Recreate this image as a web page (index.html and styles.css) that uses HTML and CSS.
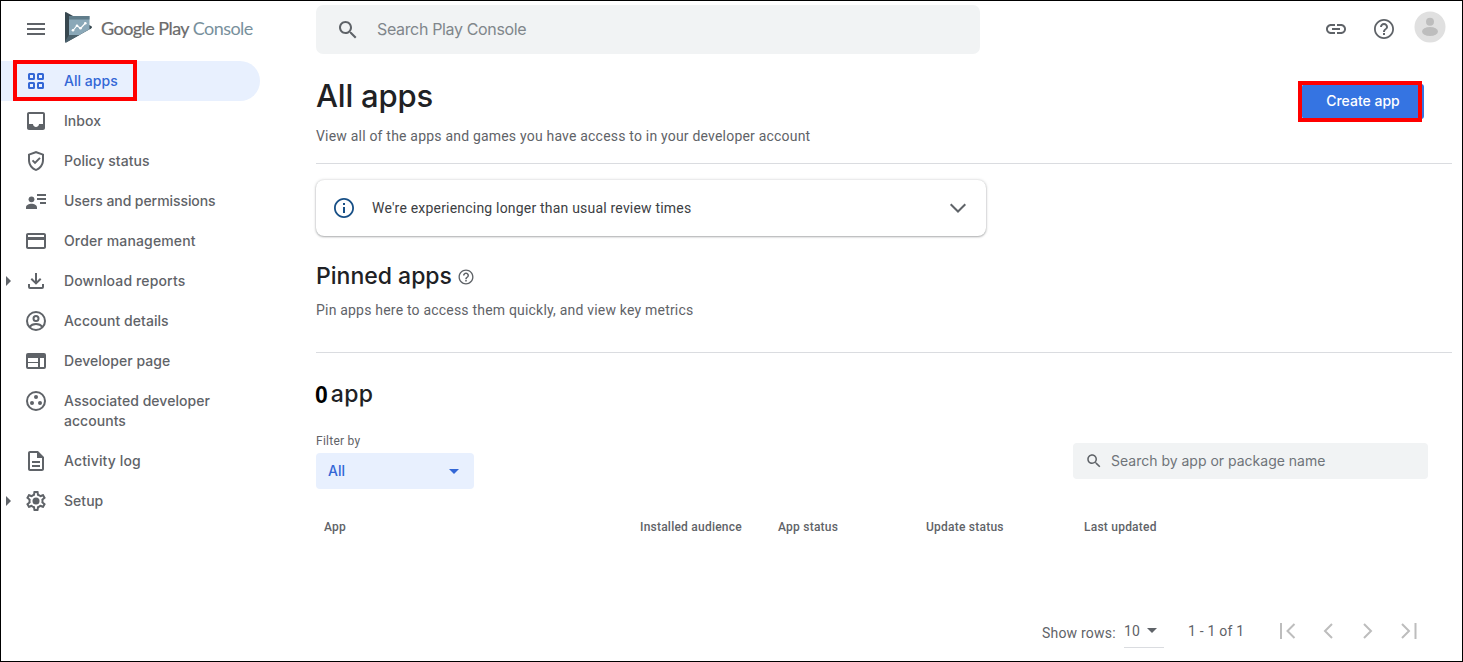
FILE: index.html
```html
<!DOCTYPE html>
<html lang="en">
<head>
<meta charset="utf-8">
<title>Google Play Console</title>
<link rel="stylesheet" href="styles.css">
</head>
<body>
<div class="page">
  <aside class="sidebar">
    <div class="brand">
      <svg class="icon menu" viewBox="0 0 24 24"><path d="M3 18h18v-2H3v2zm0-5h18v-2H3v2zm0-7v2h18V6H3z"/></svg>
      <svg class="logo" viewBox="0 0 28 31" width="28" height="31">
        <path d="M0 1Q0-.3 1.300.3L26 14Q28 15.200 26 16.400L1.500 30.300Q0 31 0 29.500z" fill="#37474f"/>
        <path d="M4 23h10.500L1.500 30.300Q0 31 0 29.500z" fill="#4c626d"/>
        <path d="M4 4h20.500v13.300L14.300 23H4z" fill="#8aa8b8"/>
        <path d="M4 4h20.500v3.500H4z" fill="#607d8b"/>
        <path d="M8 18.500l4-5 3.500 3 5-5.500" fill="none" stroke="#fff" stroke-width="1.200"/>
        <g fill="#fff"><circle cx="8" cy="18.300" r="1.300"/><circle cx="12" cy="13.700" r="1.300"/><circle cx="15.500" cy="16.300" r="1.300"/><circle cx="20.300" cy="11.200" r="1.300"/></g>
      </svg>
      <div class="wordmark"><span class="play">Google Play</span> <span class="console">Console</span></div>
    </div>
    <nav class="nav">
      <a class="item active"><svg class="icon" viewBox="0 0 24 24"><path fill-rule="evenodd" d="M5.500 4h4A1.500 1.500 0 0 1 11 5.500v4A1.500 1.500 0 0 1 9.500 11h-4A1.500 1.500 0 0 1 4 9.500v-4A1.500 1.500 0 0 1 5.500 4zM6 6v3h3V6zM14.500 4h4A1.500 1.500 0 0 1 20 5.500v4a1.500 1.500 0 0 1-1.500 1.500h-4A1.500 1.500 0 0 1 13 9.500v-4A1.500 1.500 0 0 1 14.500 4zM15 6v3h3V6zM5.500 13h4a1.500 1.500 0 0 1 1.500 1.500v4A1.500 1.500 0 0 1 9.500 20h-4A1.500 1.500 0 0 1 4 18.500v-4A1.500 1.500 0 0 1 5.500 13zM6 15v3h3v-3zM14.500 13h4a1.500 1.500 0 0 1 1.500 1.500v4a1.500 1.500 0 0 1-1.500 1.500h-4a1.500 1.500 0 0 1-1.500-1.500v-4a1.500 1.500 0 0 1 1.500-1.500zM15 15v3h3v-3z"/></svg><span>All apps</span><i class="highlight highlight-nav"></i></a>
      <a class="item"><svg class="icon" viewBox="0 0 24 24"><path d="M19 3H5c-1.100 0-2 .9-2 2v14c0 1.100.9 2 2 2h14c1.100 0 2-.9 2-2V5c0-1.100-.9-2-2-2zm0 12h-4c0 1.660-1.350 3-3 3s-3-1.340-3-3H5V5h14v10z"/></svg><span>Inbox</span></a>
      <a class="item"><svg class="icon" viewBox="0 0 24 24"><path d="M12 2 4 5v6.090c0 5.050 3.410 9.760 8 10.910 4.590-1.150 8-5.860 8-10.910V5l-8-3zm6 9.090c0 4-2.550 7.700-6 8.830-3.450-1.130-6-4.820-6-8.830V6.310l6-2.120 6 2.120v4.780zM9.200 10.700 7.800 12.100 11 15.300l5.700-5.700-1.400-1.400L11 12.500z"/></svg><span>Policy status</span></a>
      <a class="item condensed"><svg class="icon" viewBox="0 0 24 24"><circle cx="7.500" cy="10.300" r="2.900"/><path d="M2 20v-1.500C2 16 5 14.800 7.500 14.800S13 16 13 18.500V20zM13 5h9v2h-9zm0 4h9v2h-9zm3 4h6v2h-6z"/></svg><span>Users and permissions</span></a>
      <a class="item wide"><svg class="icon" viewBox="0 0 24 24"><path d="M20 4H4c-1.110 0-1.990.89-1.990 2L2 18c0 1.110.89 2 2 2h16c1.110 0 2-.89 2-2V6c0-1.110-.89-2-2-2zm0 14H4v-7h16v7zm0-10H4V6h16v2z"/></svg><span>Order management</span></a>
      <a class="item expandable wide"><svg class="icon" viewBox="0 0 24 24"><path d="M11 4h2v8l3-3 1.400 1.400L12 15.800 6.600 10.400 8 9l3 3zM4 15h2v3h12v-3h2v3a2 2 0 0 1-2 2H6a2 2 0 0 1-2-2z"/></svg><span>Download reports</span></a>
      <a class="item"><svg class="icon" viewBox="0 0 24 24"><g fill="none" stroke="currentColor" stroke-width="2"><circle cx="12" cy="12" r="9"/><circle cx="12" cy="9.500" r="2.500"/><path d="M5.500 18c1.500-2 4-3 6.500-3s5 1 6.500 3"/></g></svg><span>Account details</span></a>
      <a class="item"><svg class="icon" viewBox="0 0 24 24"><path fill-rule="evenodd" d="M4 4h16a2 2 0 0 1 2 2v12a2 2 0 0 1-2 2H4a2 2 0 0 1-2-2V6a2 2 0 0 1 2-2zM4 9v4h10V9zm0 5v4h10v-4zm12-5v9h4V9z"/></svg><span>Developer page</span></a>
      <a class="item tall"><svg class="icon" viewBox="0 0 24 24"><circle cx="12" cy="12" r="9" fill="none" stroke="currentColor" stroke-width="2"/><circle cx="12" cy="8" r="2"/><circle cx="8" cy="14" r="2"/><circle cx="16" cy="14" r="2"/></svg><span>Associated developer<br>accounts</span></a>
      <a class="item wide"><svg class="icon" viewBox="0 0 24 24"><path d="M8 16h8v2H8zm0-4h8v2H8zm6-10H6c-1.100 0-2 .9-2 2v16c0 1.100.89 2 1.990 2H18c1.100 0 2-.9 2-2V8l-6-6zm4 18H6V4h7v5h5v11z"/></svg><span>Activity log</span></a>
      <a class="item expandable"><svg class="icon" viewBox="0 0 24 24"><path d="M19.430 12.980c.04-.32.070-.64.070-.98s-.03-.66-.07-.98l2.110-1.650c.19-.15.240-.42.120-.64l-2-3.460c-.09-.16-.26-.25-.44-.25-.06 0-.12.010-.17.030l-2.490 1c-.52-.4-1.080-.73-1.690-.98l-.38-2.650C14.460 2.180 14.250 2 14 2h-4c-.25 0-.46.180-.49.420l-.38 2.650c-.61.250-1.170.590-1.690.98l-2.490-1c-.06-.02-.12-.03-.18-.03-.17 0-.34.090-.43.250l-2 3.460c-.13.220-.07.490.12.640l2.110 1.650c-.04.320-.07.650-.07.980s.03.660.070.980l-2.110 1.650c-.19.150-.24.420-.12.640l2 3.460c.09.160.26.250.44.250.06 0 .12-.01.170-.03l2.490-1c.52.400 1.080.730 1.690.980l.38 2.650c.03.240.24.420.49.420h4c.25 0 .46-.18.490-.42l.38-2.650c.61-.25 1.170-.59 1.690-.98l2.490 1c.06.020.12.030.18.030.17 0 .34-.09.430-.25l2-3.460c.12-.22.070-.49-.12-.64l-2.110-1.650zm-1.980-1.710c.04.310.05.520.05.730s-.02.430-.05.730l-.14 1.130.89.700 1.080.84-.7 1.210-1.270-.51-1.040-.42-.9.680c-.43.320-.84.560-1.250.73l-1.060.43-.16 1.130-.2 1.350h-1.400l-.19-1.350-.16-1.130-1.060-.43c-.43-.18-.83-.41-1.230-.71l-.91-.7-1.060.43-1.270.51-.7-1.210 1.080-.84.890-.7-.14-1.130c-.03-.31-.05-.54-.05-.74s.02-.43.050-.73l.14-1.130-.89-.7-1.080-.84.700-1.210 1.270.51 1.040.42.900-.68c.43-.32.840-.56 1.250-.73l1.060-.43.160-1.130.2-1.350h1.390l.19 1.350.16 1.130 1.060.43c.43.180.83.410 1.230.71l.91.700 1.060-.43 1.270-.51.700 1.210-1.070.85-.89.700.14 1.130z"/><circle cx="12" cy="12" r="3.500"/></svg><span>Setup</span></a>
    </nav>
  </aside>

  <main class="main">
    <header class="topbar">
      <div class="search">
        <svg class="icon" viewBox="0 0 24 24"><path d="M15.500 14h-.79l-.28-.27C15.410 12.590 16 11.110 16 9.500 16 5.910 13.090 3 9.500 3S3 5.910 3 9.500 5.910 16 9.500 16c1.610 0 3.090-.59 4.230-1.570l.27.280v.79l5 4.990L20.490 19l-4.990-5zm-6 0C7.010 14 5 11.990 5 9.500S7.010 5 9.500 5 14 7.010 14 9.500 11.990 14 9.500 14z"/></svg>
        <span>Search Play Console</span>
      </div>
      <div class="tools">
        <svg class="icon" viewBox="0 0 24 24"><path d="M3.900 12c0-1.710 1.390-3.100 3.100-3.100h4V7H7c-2.760 0-5 2.240-5 5s2.240 5 5 5h4v-1.900H7c-1.710 0-3.100-1.390-3.100-3.100zM8 13h8v-2H8v2zm9-6h-4v1.900h4c1.710 0 3.100 1.390 3.100 3.100s-1.390 3.100-3.100 3.100h-4V17h4c2.760 0 5-2.240 5-5s-2.240-5-5-5z"/></svg>
        <svg class="icon" viewBox="0 0 24 24"><path id="help" d="M11 18h2v-2h-2v2zm1-16C6.480 2 2 6.480 2 12s4.480 10 10 10 10-4.480 10-10S17.520 2 12 2zm0 18.200c-4.500 0-8.200-3.700-8.200-8.200S7.500 3.800 12 3.800s8.200 3.700 8.200 8.200-3.700 8.200-8.200 8.200zM12 6c-2.210 0-4 1.790-4 4h2c0-1.100.9-2 2-2s2 .9 2 2c0 2-3 1.750-3 5h2c0-2.250 3-2.500 3-5 0-2.210-1.790-4-4-4z"/></svg>
        <svg class="avatar" viewBox="0 0 32 32"><circle cx="16" cy="16" r="15.500" fill="#e0e0e0"/><circle cx="16" cy="10.700" r="4" fill="#bdbdbd"/><ellipse cx="16" cy="20.500" rx="8" ry="4.600" fill="#bdbdbd"/></svg>
      </div>
    </header>

    <section class="intro">
      <div>
        <h1>All apps</h1>
        <p class="sub sub-intro">View all of the apps and games you have access to in your developer account</p>
      </div>
      <div class="create">Create app<i class="highlight highlight-create"></i></div>
    </section>

    <div class="notice">
      <svg class="icon info" viewBox="0 0 24 24"><path d="M11 7h2v2h-2zm0 4h2v6h-2zm1-9C6.480 2 2 6.480 2 12s4.480 10 10 10 10-4.480 10-10S17.520 2 12 2zm0 18.200c-4.500 0-8.200-3.700-8.200-8.200S7.500 3.800 12 3.800s8.200 3.700 8.200 8.200-3.700 8.200-8.200 8.200z"/></svg>
      <span>We're experiencing longer than usual review times</span>
      <svg class="icon chevron" viewBox="0 0 24 24"><path d="M4.700 8.200l7.300 7.300 7.300-7.300" fill="none" stroke="currentColor" stroke-width="2"/></svg>
    </div>

    <section class="pinned">
      <h2><span>Pinned apps</span><svg class="help-small" viewBox="0 0 24 24"><use href="#help"/></svg></h2>
      <p class="sub sub-pinned">Pin apps here to access them quickly, and view key metrics</p>
    </section>

    <section class="apps">
      <h2 class="count"><b>0</b><span>app</span></h2>
      <div class="filters">
        <div>
          <div class="label">Filter by</div>
          <div class="select"><span>All</span><i class="caret"></i></div>
        </div>
        <div class="table-search">
          <svg viewBox="0 0 24 24"><path d="M15.500 14h-.79l-.28-.27C15.410 12.590 16 11.110 16 9.500 16 5.910 13.090 3 9.500 3S3 5.910 3 9.500 5.910 16 9.500 16c1.610 0 3.090-.59 4.230-1.570l.27.280v.79l5 4.990L20.490 19l-4.990-5zm-6 0C7.010 14 5 11.990 5 9.500S7.010 5 9.500 5 14 7.010 14 9.500 11.990 14 9.500 14z"/></svg>
          <span>Search by app or package name</span>
        </div>
      </div>
      <div class="thead"><span>App</span><span>Installed audience</span><span>App status</span><span>Update status</span><span>Last updated</span></div>
      <footer class="pager">
        <span class="rows-label">Show rows:</span>
        <span class="rows">10<i class="caret dark"></i></span>
        <span class="range">1 - 1 of 1</span>
        <span class="arrows">
          <svg viewBox="0 0 24 24"><path d="M5 4v16M18.500 5l-7 7 7 7"/></svg>
          <svg viewBox="0 0 24 24"><path d="M16 5l-7 7 7 7"/></svg>
          <svg viewBox="0 0 24 24"><path d="M8 5l7 7-7 7"/></svg>
          <svg viewBox="0 0 24 24"><path d="M19.500 4v16M6 5l7 7-7 7"/></svg>
        </span>
      </footer>
    </section>
  </main>
</div>
</body>
</html>
```

FILE: styles.css
```css
* { box-sizing: border-box; }
body { margin: 0; font-family: Roboto, sans-serif; color: #5f6368; background: #fff; }
h1, h2, p { margin: 0; font-weight: 500; }
svg { display: block; flex: none; fill: currentColor; }

.page { display: flex; width: 1463px; height: 662px; border: 1px solid #000; overflow: hidden; }
.icon { width: 24px; height: 24px; }

.sidebar { width: 315px; flex: none; }
.brand { display: flex; align-items: center; height: 60px; padding: 0 0 4px 23px; }
.logo { margin-left: 17px; margin-top: -3px; }
.wordmark { margin-left: 8px; font: 400 18px/24px Lato, sans-serif; white-space: nowrap; letter-spacing: -0.55px; margin-top: -2px; }
.play { color: #6b6b6b; -webkit-text-stroke: 0.2px #6b6b6b; }
.console { color: #78909c; }
.nav { display: flex; flex-direction: column; width: 259px; font: 500 14px/20px Inter, sans-serif; letter-spacing: 0.04px; }
.item { position: relative; display: flex; height: 40px; padding: 8px 0 0 23px; }
.item span { padding: 2px 0 0 16px; }
.tall { height: 60px; }
.condensed { letter-spacing: -0.07px; }
.wide { letter-spacing: 0.14px; }
.active { background: #e8f0fe; color: #3367d6; border-radius: 0 20px 20px 0; }
.expandable::before { content: ""; position: absolute; left: 5px; top: 15px; border-left: 5px solid #5f6368; border-top: 5px solid transparent; border-bottom: 5px solid transparent; }
.highlight { position: absolute; border: 4px solid #f00; }
.highlight-nav { left: 12px; top: -1px; width: 124px; height: 41px; }
.highlight-create { left: -4px; top: -3px; width: 124px; height: 41px; }

.main { flex: 1; min-width: 0; padding-right: 10px; }
.topbar { display: flex; justify-content: space-between; padding-top: 4px; height: 60px; }
.search { display: flex; align-items: center; width: 664px; height: 49px; padding-left: 20px; background: #f1f3f4; border-radius: 7px; font: 400 16px/24px Inter, sans-serif; letter-spacing: -0.35px; color: #80868b; }
.search .icon { color: #5f6368; }
.search span { margin-left: 17px; padding-bottom: 1px; }
.tools { display: flex; padding-right: 6px; }
.tools .icon { margin-top: 12px; margin-right: 24px; }
.tools .avatar { width: 32px; height: 32px; margin: 6px 0 0 -6px; }

.intro { display: flex; justify-content: space-between; height: 103px; border-bottom: 1px solid #dadce0; }
h1 { color: #202124; font: 500 31px/40px Inter, sans-serif; letter-spacing: -0.2px; margin-top: 15px; }
.sub { font: 400 14px/20px Roboto, sans-serif; letter-spacing: 0.2px; }
.sub-intro { margin-top: 10px; }
.create { position: relative; width: 122px; height: 35px; margin: 23px 28px 0 0; background: #3574e2; border-radius: 3px; color: #fff; font: 500 14px/34px Inter, sans-serif; text-align: center; }

.notice { display: flex; align-items: center; width: 670px; height: 56px; margin-top: 16px; padding: 0 16px; border-radius: 8px; box-shadow: 0 1px 2px rgba(60,64,67,.35), 0 0 3px rgba(60,64,67,.25); color: #3c4043; font-size: 14px; letter-spacing: 0.2px; }
.info { color: #174f86; }
.notice span { margin-left: 16px; flex: 1; }
.chevron { color: #5f6368; }

.pinned { height: 117px; padding-top: 24px; border-bottom: 1px solid #dadce0; }
h2 { display: flex; align-items: center; height: 32px; color: #202124; font: 500 23px/32px Inter, sans-serif; }
.help-small { width: 18px; height: 18px; margin: 2px 0 0 5px; color: #5f6368; }
.sub-pinned { margin-top: 8px; }

.apps { padding-top: 25px; }
.count b { font: 700 23px/32px "Liberation Sans", sans-serif; color: #000; margin: 1px 3px 0 -1px; }
.count span { margin-top: -1px; letter-spacing: 0.3px; }
.filters { display: flex; justify-content: space-between; align-items: flex-end; padding-right: 24px; margin-top: 21px; }
.label { font-size: 12px; line-height: 16px; letter-spacing: 0.25px; padding-top: 2px; height: 22px; }
.select { display: flex; align-items: center; justify-content: space-between; width: 158px; height: 36px; padding: 0 15px 0 12px; background: #e8f0fe; border-radius: 4px; color: #3367d6; font: 500 14px/20px Inter, sans-serif; }
.caret { border-top: 5px solid #3367d6; border-left: 5px solid transparent; border-right: 5px solid transparent; }
.dark { border-top-color: #5f6368; }
.table-search { display: flex; align-items: center; width: 355px; height: 36px; margin-bottom: 10px; padding-left: 12px; background: #f1f3f4; border-radius: 4px; font: 400 14px/20px Inter, sans-serif; color: #6f7479; }
.table-search svg { width: 18px; height: 18px; color: #5f6368; }
.table-search span { margin-left: 8px; }
.thead { display: flex; margin-top: 30px; padding-left: 8px; font: 500 12px/16px Roboto, sans-serif; letter-spacing: 0.23px; }
.thead span:nth-child(1) { width: 316px; }
.thead span:nth-child(2) { width: 138px; }
.thead span:nth-child(3) { width: 148px; }
.thead span:nth-child(4) { width: 158px; }
.pager { display: flex; margin-top: 80px; padding-left: 726px; font-size: 14px; line-height: 20px; letter-spacing: 0.2px; }
.rows-label { width: 82px; margin-top: 8px; }
.rows { display: flex; align-items: center; width: 40px; height: 33px; padding-bottom: 1px; border-bottom: 1px solid #dadce0; }
.rows .caret { margin-left: 7px; }
.range { width: 88px; margin: 6px 0 0 24px; }
.arrows { display: flex; gap: 16px; margin-top: 4px; }
.arrows svg { width: 24px; height: 24px; fill: none; stroke: #bdbdbd; stroke-width: 2; }
```
